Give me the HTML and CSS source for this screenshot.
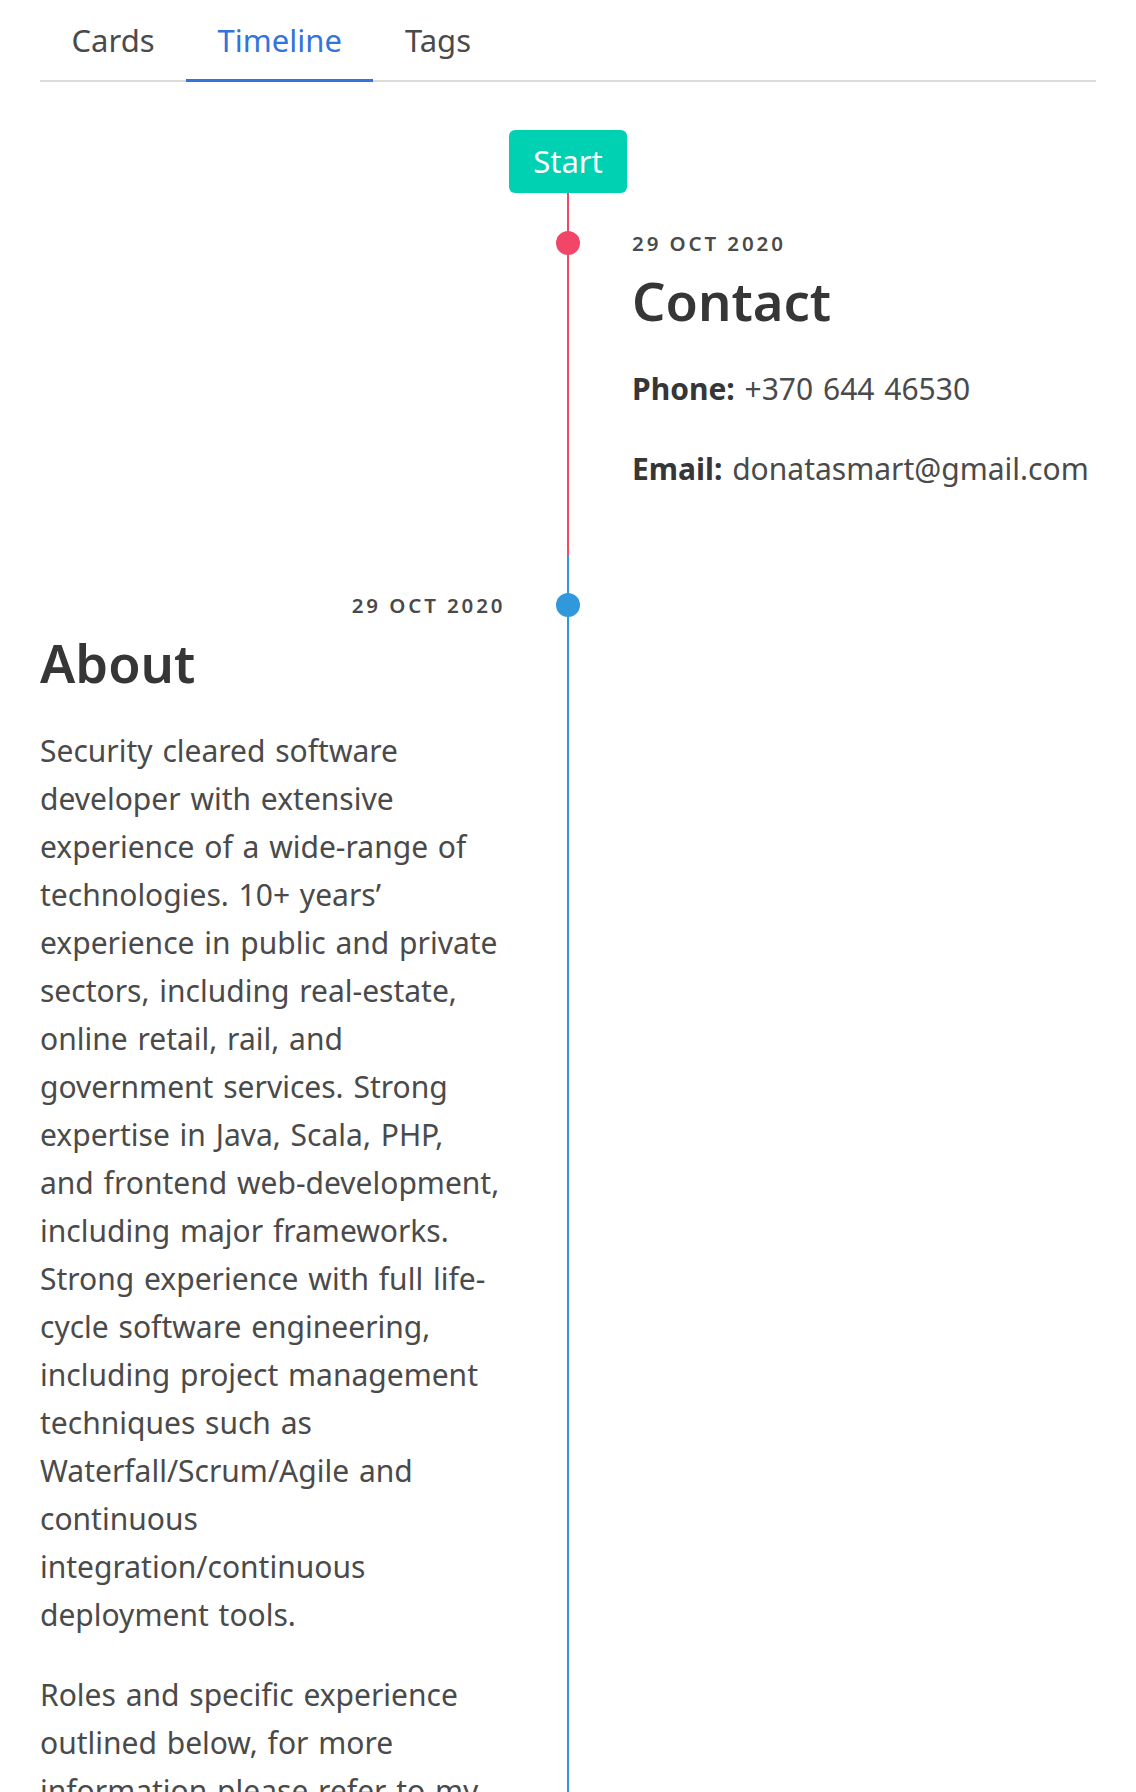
FILE: index.html
```html
<!DOCTYPE html>
<html lang="en">
<head>
<meta charset="utf-8">
<title>Timeline</title>
<link rel="stylesheet" href="styles.css">
</head>
<body>
<div class="page">
  <nav class="tabs">
    <ul>
      <li><a href="#">Cards</a></li>
      <li class="is-active"><a href="#">Timeline</a></li>
      <li><a href="#">Tags</a></li>
    </ul>
  </nav>

  <div class="timeline">
    <header class="timeline-header">
      <span class="tag">Start</span>
    </header>

    <div class="timeline-item is-danger is-right">
      <div class="timeline-side"></div>
      <div class="timeline-axis"><span class="timeline-marker"></span></div>
      <div class="timeline-content">
        <p class="heading">29 Oct 2020</p>
        <h2 class="title">Contact</h2>
        <div class="content">
          <p><strong>Phone:</strong> +370 644 46530</p>
          <p><strong>Email:</strong> donatasmart@gmail.com</p>
        </div>
      </div>
    </div>

    <div class="timeline-item is-info is-left">
      <div class="timeline-content">
        <p class="heading">29 Oct 2020</p>
        <h2 class="title">About</h2>
        <div class="content">
          <p>Security cleared software developer with extensive experience of a wide-range of technologies. 10+ years’ experience in public and private sectors, including real-estate, online retail, rail, and government services. Strong expertise in Java, Scala, PHP, and frontend web-development, including major frameworks. Strong experience with full life-cycle software engineering, including project management techniques such as Waterfall/Scrum/Agile and continuous integration/continuous deployment tools.</p>
          <p>Roles and specific experience outlined below, for more information please refer to my CV or LinkedIn profile.</p>
        </div>
      </div>
      <div class="timeline-axis"><span class="timeline-marker"></span></div>
      <div class="timeline-side"></div>
    </div>
  </div>
</div>
</body>
</html>
```

FILE: styles.css
```css
html {
  scrollbar-width: none;
}
html::-webkit-scrollbar {
  display: none;
}
body {
  margin: 0;
  background: #ffffff;
  color: #4a4a4a;
  font-family: "Noto Sans", "Open Sans", sans-serif;
  font-size: 30px;
  line-height: 48px;
}

.page {
  padding: 3px 40px 0;
}

/* Tabs */
.tabs ul {
  display: flex;
  list-style: none;
  margin: 0;
  padding: 0;
  border-bottom: 2px solid #dbdbdb;
}
.tabs li {
  margin-bottom: -2px;
}
.tabs a {
  display: block;
  padding: 13px 31.5px 15px;
  font-size: 31px;
  line-height: 48px;
  color: #4a4a4a;
  text-decoration: none;
  border-bottom: 3px solid transparent;
}
.tabs .is-active a {
  color: #3273dc;
  border-bottom-color: #3273dc;
}

/* Timeline */
.timeline-header {
  display: flex;
  justify-content: center;
  margin-top: 48px;
}
.tag {
  display: inline-flex;
  align-items: center;
  height: 63px;
  padding: 0 24px;
  border-radius: 6px;
  background: #00d1b2;
  color: #ffffff;
  font-size: 31px;
  line-height: 1;
}

.timeline-item {
  display: grid;
  grid-template-columns: 1fr 128px 1fr;
  --accent: #dbdbdb;
}
.timeline-item.is-danger { --accent: #f14668; }
.timeline-item.is-info { --accent: #3298dc; }

.timeline-axis {
  display: flex;
  justify-content: center;
  align-items: flex-start;
  background: linear-gradient(var(--accent), var(--accent)) center top / 2px 100% no-repeat;
}
.timeline-marker {
  width: 24px;
  height: 24px;
  margin-top: 38px;
  border-radius: 50%;
  background: var(--accent);
}

.timeline-content {
  padding: 34px 0 62px;
  min-width: 0;
}

.heading {
  margin: 0;
  font-size: 20.5px;
  line-height: 32px;
  font-weight: 600;
  letter-spacing: 2.9px;
  text-transform: uppercase;
  color: #4a4a4a;
}
.is-left .heading {
  text-align: right;
  margin-right: -1.5px;
}

.title {
  margin: 12px 0 34px;
  font-size: 52.5px;
  line-height: 60px;
  font-weight: 600;
  color: #363636;
}

.content {
  word-spacing: 2px;
}
.content p {
  margin: 0;
}
.content p + p {
  margin-top: 32px;
}
.is-left .content {
  margin-right: 0.5px;
}
.content strong {
  color: #363636;
  font-weight: 700;
}
```
